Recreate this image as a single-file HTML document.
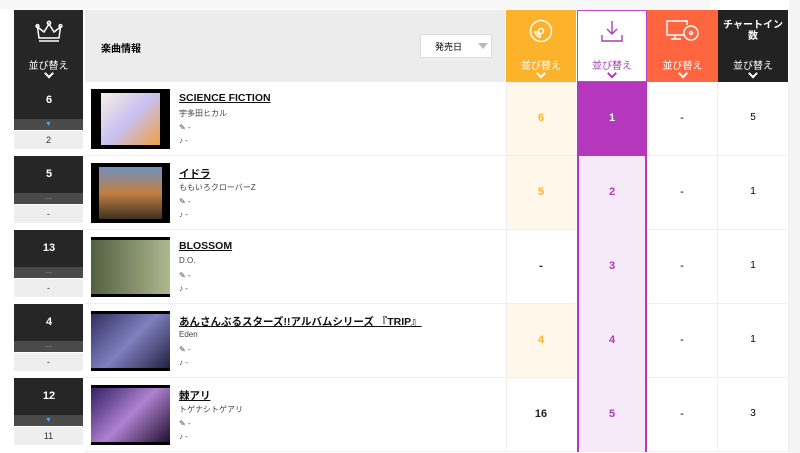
<!DOCTYPE html>
<html><head><meta charset="utf-8"><style>
*{margin:0;padding:0;box-sizing:border-box}
body{width:800px;height:453px;overflow:hidden;background:#fff;font-family:"Liberation Sans","Noto Sans CJK JP",sans-serif;position:relative}
.a{position:absolute}
.hd{color:#fff;font-size:10px;text-align:center}
.chev{position:absolute;left:50%;width:7px;height:7px;border-right:2px solid;border-bottom:2px solid;transform:translateX(-50%) rotate(45deg)}
.rk{position:absolute;left:14px;width:69px}
.num{font-weight:bold;font-size:11px;text-align:center;position:absolute;width:70px}
.ttl{font-weight:bold;font-size:10.5px;text-decoration:underline;color:#111}
.sm{font-size:8px;color:#444}
</style></head><body>
<div class="a" style="left:0;top:0;width:710px;height:9px;background:#f7f7f7"></div>
<div class="a" style="left:789px;top:0;width:11px;height:453px;background:#f4f4f4"></div>
<!-- header -->
<div class="a hd" style="left:14px;top:10px;width:69px;height:72px;background:#262626">
<svg class="a" style="left:21px;top:10px" width="28" height="24" viewBox="0 0 28 24" fill="none" stroke="#fff" stroke-width="1.5"><path d="M4 18L2.5 7L9 12L14 4L19 12L25.5 7L24 18Z M4 21H24"/><circle cx="14" cy="3" r="1.6"/><circle cx="2.5" cy="6" r="1.4"/><circle cx="25.5" cy="6" r="1.4"/></svg>
<div class="a" style="top:47px;width:69px">並び替え</div><div class="chev" style="top:60px;color:#fff"></div></div>
<div class="a" style="left:85px;top:10px;width:420px;height:72px;background:#ececec"></div>
<div class="a" style="left:101px;top:40px;font-size:10px;font-weight:bold">楽曲情報</div>
<div class="a" style="left:420px;top:34px;width:72px;height:24px;background:#fff;border:1px solid #ddd;font-size:9px;padding:5px 0 0 14px">発売日<span style="position:absolute;left:57px;top:8px;border:5px solid transparent;border-top:6px solid #bbb;border-bottom:0"></span></div>
<div class="a hd" style="left:506px;top:10px;width:70px;height:72px;background:#fdb22b">
<svg class="a" style="left:23px;top:9px" width="24" height="24" viewBox="0 0 24 24" fill="none" stroke="#fff" stroke-width="1.4"><circle cx="12" cy="12" r="10.5"/><circle cx="12" cy="12" r="2.5"/><path d="M6 12a6 6 0 0 0 6 6M8 12a4 4 0 0 0 4 4"/></svg>
<div class="a" style="top:47px;width:70px">並び替え</div><div class="chev" style="top:60px;color:#fff"></div></div>
<div class="a hd" style="left:577px;top:10px;width:70px;height:72px;background:#fff;border:1px solid #c045c8;color:#b437bc">
<svg class="a" style="left:22px;top:8px" width="24" height="24" viewBox="0 0 24 24" fill="none" stroke="#b437bc" stroke-width="1.4"><path d="M12 2v13M7 10l5 5 5-5M2 16v6h20v-6"/></svg>
<div class="a" style="top:46px;width:68px">並び替え</div><div class="chev" style="top:59px;color:#b437bc"></div></div>
<div class="a hd" style="left:647px;top:10px;width:71px;height:72px;background:#ff6640">
<svg class="a" style="left:18px;top:9px" width="34" height="24" viewBox="0 0 34 24" fill="none" stroke="#fff" stroke-width="1.4"><path d="M22 6V2H2v14h18M10 16v4M6 20h10"/><circle cx="26" cy="14" r="7" fill="#ff6640"/><circle cx="26" cy="14" r="1.5"/></svg>
<div class="a" style="top:47px;width:71px">並び替え</div><div class="chev" style="top:60px;color:#fff"></div></div>
<div class="a hd" style="left:718px;top:10px;width:70px;height:72px;background:#222">
<div class="a" style="top:10px;width:70px;font-size:10px;line-height:11px;font-weight:bold">チャートイン<br>数</div>
<div class="a" style="top:47px;width:70px">並び替え</div><div class="chev" style="top:60px;color:#fff"></div></div>

<div id="rows"></div>
<script>
var R=[["6","2","▼","SCIENCE FICTION","宇多田ヒカル","6","1","-","5",1,"linear-gradient(135deg,#f5f0e8,#c8c0f0 50%,#f0a040)",10],
["5","-","—","イドラ","ももいろクローバーZ","5","2","-","1",1,"linear-gradient(#7090c0,#c08040 50%,#403020)",8],
["13","-","—","BLOSSOM","D.O.","-","3","-","1",0,"linear-gradient(90deg,#506040,#b0b890)",0],
["4","-","—","あんさんぶるスターズ!!アルバムシリーズ 『TRIP』","Eden","4","4","-","1",1,"linear-gradient(135deg,#303060,#8080c0 50%,#202040)",0],
["12","11","▼","棘アリ","トゲナシトゲアリ","16","5","-","3",0,"linear-gradient(135deg,#302060,#b080d0 50%,#201030)",0]];
var h="";
R.forEach(function(r,i){var y=82+i*74;
h+='<div class="a" style="left:85px;top:'+(y+73)+'px;width:704px;height:1px;background:#eee"></div>';
h+='<div class="rk" style="top:'+y+'px;height:37px;background:#262626"></div><div class="num" style="left:14px;top:'+(y+12)+'px;color:#fff">'+r[0]+'</div>';
h+='<div class="rk" style="top:'+(y+37)+'px;height:11px;background:#4a4a4a;color:'+(r[2]=="▼"?'#4aa8f0':'#888')+';font-size:7px;text-align:center;line-height:11px">'+r[2]+'</div>';
h+='<div class="rk" style="top:'+(y+49)+'px;height:18px;background:#eee;font-size:9px;text-align:center;line-height:18px;color:#333">'+r[1]+'</div>';
h+='<div class="a" style="left:91px;top:'+(y+7)+'px;width:79px;height:60px;background:#000"><div style="margin:'+(r[11]?4:3)+'px '+r[11]+'px;height:'+(r[11]?52:54)+'px;background:'+r[10]+'"></div></div>';
h+='<div class="a ttl" style="left:179px;top:'+(y+10)+'px">'+r[3]+'</div><div class="a sm" style="left:179px;top:'+(y+26)+'px">'+r[4]+'</div><div class="a sm" style="left:179px;top:'+(y+41)+'px">✎ -</div><div class="a sm" style="left:179px;top:'+(y+54)+'px">♪ -</div>';
h+='<div class="a" style="left:506px;top:'+y+'px;width:70px;height:73px;background:'+(r[9]?'#fff7ea':'#fff')+';border-left:1px solid #eee"></div><div class="num" style="left:506px;top:'+(y+30)+'px;color:'+(r[9]?'#fdb22b':'#222')+'">'+r[5]+'</div>';
h+='<div class="a" style="left:577px;top:'+y+'px;width:70px;height:74px;background:'+(i==0?'#b437bc':'#f6eaf8')+';border-left:2px solid #b437bc;border-right:2px solid #b437bc"></div><div class="num" style="left:577px;top:'+(y+30)+'px;color:'+(i==0?'#fff':'#b437bc')+'">'+r[6]+'</div>';
h+='<div class="num" style="left:647px;top:'+(y+30)+'px;font-weight:normal">'+r[7]+'</div><div class="a" style="left:717px;top:'+y+'px;width:1px;height:74px;background:#eee"></div><div class="a" style="left:788px;top:'+y+'px;width:1px;height:74px;background:#eee"></div>';
h+='<div class="num" style="left:718px;top:'+(y+30)+'px;font-weight:normal;font-size:10px">'+r[8]+'</div>';});
document.getElementById("rows").innerHTML=h;
</script>
</body></html>
